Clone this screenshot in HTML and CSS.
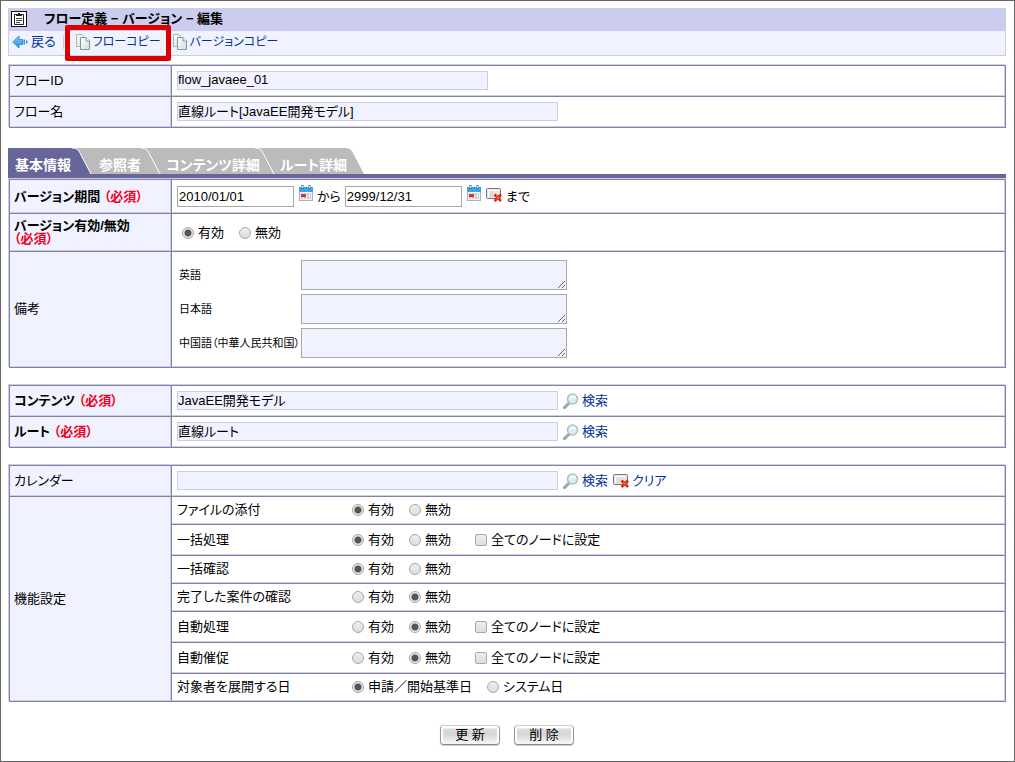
FILE: index.html
```html
<!DOCTYPE html>
<html lang="ja">
<head>
<meta charset="utf-8">
<title>フロー定義 − バージョン − 編集</title>
<link rel="stylesheet" href="styles.css">
</head>
<body>
<svg class="sprites" width="0" height="0" aria-hidden="true">
  <defs>
    <linearGradient id="blue" x1="0" y1="0" x2="0" y2="1"><stop offset="0" stop-color="#8fd2f8"/><stop offset="1" stop-color="#2388d6"/></linearGradient>
    <linearGradient id="paper" x1="0" y1="0" x2="1" y2="1"><stop offset="0" stop-color="#ffffff"/><stop offset="1" stop-color="#d0dede"/></linearGradient>
    <symbol id="copy" viewBox="0 0 16 16">
      <path d="M1.500.5h5.500l2.500 3v9h-8z" fill="url(#paper)" stroke="#a3b5b5"/>
      <path d="M5.500 3.500h5.500l3.500 3.500v8.500h-9z" fill="url(#paper)" stroke="#819999"/>
      <path d="M11 3.500v3.500h3.500" fill="#fff" stroke="#819999"/>
    </symbol>
    <symbol id="calendar" viewBox="0 0 14 16">
      <rect x=".5" y="2.500" width="13" height="13" fill="#eef1f3" stroke="#a9b4ba"/>
      <rect y="2" width="14" height="5" fill="#38a5e8"/>
      <path d="M3.500 0v4M10.500 0v4" stroke="#5f7480" stroke-width="2"/>
      <path d="M3.500 1v2M10.500 1v2" stroke="#d9edf8"/>
      <path d="M2 9.500h10M2 12.500h10" stroke="#b5bfc6" stroke-width="2" stroke-dasharray="2 1"/>
      <rect x="2" y="9" width="5" height="3" fill="#e22d2d"/>
    </symbol>
    <symbol id="erase" viewBox="0 0 16 15">
      <rect x=".5" y="1.500" width="14" height="10" rx="1" fill="#e6e6e6" stroke="#777"/>
      <path d="M2.500 10V3.500H13" fill="none" stroke="#fff"/>
      <path d="M4.500 4v6M6.500 4v6" stroke="#d3d3d3"/>
      <path d="M8.500 7.500l6.500 6.500M15 7.500l-6.500 6.500" stroke="#e01f05" stroke-width="2.500"/>
      <path d="M10 9l3.500 3.500M13.500 9L10 12.500" stroke="#ff7a3d"/>
    </symbol>
    <symbol id="search" viewBox="0 0 16 16">
      <path d="M1.500 14.500L6 10" stroke="#959595" stroke-width="3" stroke-linecap="round"/>
      <path d="M1.500 14L5.500 10" stroke="#cfcfcf"/>
      <circle cx="9.500" cy="6" r="5" fill="#d9edf8" stroke="#b3bcc2" stroke-width="1.500"/>
      <path d="M6 6.500q3-3 7-1v-1.500q-3-3-6-.5z" fill="#f6fcff"/>
    </symbol>
  </defs>
</svg>
<div class="page">
  <header>
    <h1 class="title">
      <svg class="title-icon" viewBox="0 0 16 16" aria-hidden="true">
        <rect x=".5" y=".5" width="15" height="15" fill="#fff" stroke="#111"/>
        <path d="M3.500 3.500h9v10h-9z" fill="#fff" stroke="#222"/>
        <path d="M5 3h6v2H5zM7 2h2v2H7z" fill="#222"/>
        <path d="M5 7.500h6M5 9.500h6M5 11.500h4" stroke="#444"/>
      </svg>
      <span>フロー定義 − バージョン − 編集</span>
    </h1>
    <nav class="toolbar">
      <a class="tool back" href="#"><svg width="16" height="14" viewBox="0 0 16 14" aria-hidden="true"><path d="M.7 7L7 1v3.500h3.500v5H7V13z" fill="url(#blue)" stroke="#3c91cf"/><path d="M11.500 4.500h1.500v5h-1.500zM14 5.500h1.500v3H14z" fill="#2f93da"/></svg>戻る</a>
      <a class="tool copy marked" href="#"><svg width="16" height="16" aria-hidden="true"><use href="#copy"/></svg>フローコピー</a>
      <a class="tool copy" href="#"><svg width="16" height="16" aria-hidden="true"><use href="#copy"/></svg>バージョンコピー</a>
    </nav>
  </header>

  <form>
    <table class="grid first">
      <tr><th scope="row"><label for="fid">フローID</label></th><td><input class="text short" id="fid" value="flow_javaee_01" readonly></td></tr>
      <tr><th scope="row"><label for="fname">フロー名</label></th><td><input class="text" id="fname" value="直線ルート[JavaEE開発モデル]" readonly></td></tr>
    </table>

    <div class="tabs" role="tablist">
      <button class="tab active" type="button" role="tab" aria-selected="true"><span>基本情報</span><svg viewBox="0 0 20 26" aria-hidden="true"><path d="M0 0C6 0 7 3 9 7L19 26H0z" fill="currentColor"/><path d="M0 0C6 0 7 3 9 7L19 26" fill="none" stroke="#fff"/></svg></button>
      <button class="tab viewers" type="button" role="tab"><span>参照者</span><svg viewBox="0 0 20 26" aria-hidden="true"><path d="M0 0C6 0 7 3 9 7L19 26" fill="none" stroke="#fff"/></svg></button>
      <button class="tab contents" type="button" role="tab"><span>コンテンツ詳細</span><svg viewBox="0 0 20 26" aria-hidden="true"><path d="M0 0C6 0 7 3 9 7L19 26" fill="none" stroke="#fff"/></svg></button>
      <button class="tab last" type="button" role="tab"><span>ルート詳細</span><svg viewBox="0 0 20 26" aria-hidden="true"><path d="M0 0C6 0 7 3 9 7L19 26H0z" fill="currentColor"/></svg></button>
    </div>

    <table class="grid basic">
      <tr class="period">
        <th scope="row" class="required">バージョン期間 <em>（必須）</em></th>
        <td><div class="line">
          <input class="date" value="2010/01/01" aria-label="開始日">
          <button class="icon" type="button" aria-label="開始日カレンダー"><svg width="14" height="16" aria-hidden="true"><use href="#calendar"/></svg></button>
          <span>から</span>
          <input class="date" value="2999/12/31" aria-label="終了日">
          <button class="icon" type="button" aria-label="終了日カレンダー"><svg width="14" height="16" aria-hidden="true"><use href="#calendar"/></svg></button>
          <button class="icon erase" type="button" aria-label="終了日クリア"><svg width="16" height="15" aria-hidden="true"><use href="#erase"/></svg></button>
          <span>まで</span>
        </div></td>
      </tr>
      <tr class="state">
        <th scope="row" class="required">バージョン有効/無効<br><em>（必須）</em></th>
        <td><div class="options inset"><label><input type="radio" name="state" checked>有効</label><label><input type="radio" name="state">無効</label></div></td>
      </tr>
      <tr class="notes">
        <th scope="row">備考</th>
        <td><div class="note-list">
          <label for="en">英語</label><textarea id="en"></textarea>
          <label for="ja">日本語</label><textarea id="ja"></textarea>
          <label for="zh">中国語（中華人民共和国）</label><textarea id="zh"></textarea>
        </div></td>
      </tr>
    </table>

    <table class="grid">
      <tr><th scope="row" class="required"><label for="content">コンテンツ <em>（必須）</em></label></th><td><div class="line"><input class="text" id="content" value="JavaEE開発モデル" readonly><a class="action" href="#"><svg width="16" height="16" aria-hidden="true"><use href="#search"/></svg>検索</a></div></td></tr>
      <tr><th scope="row" class="required"><label for="route">ルート <em>（必須）</em></label></th><td><div class="line"><input class="text" id="route" value="直線ルート" readonly><a class="action" href="#"><svg width="16" height="16" aria-hidden="true"><use href="#search"/></svg>検索</a></div></td></tr>
    </table>

    <table class="grid">
      <tr><th scope="row"><label for="cal">カレンダー</label></th><td><div class="line"><input class="text" id="cal" readonly><a class="action" href="#"><svg width="16" height="16" aria-hidden="true"><use href="#search"/></svg>検索</a><a class="action" href="#"><svg width="16" height="15" aria-hidden="true"><use href="#erase"/></svg>クリア</a></div></td></tr>
      <tr class="slim"><th scope="row" rowspan="7">機能設定</th><td><div class="feature"><span>ファイルの添付</span><div class="options"><label><input type="radio" name="f1" checked>有効</label><label><input type="radio" name="f1">無効</label></div></div></td></tr>
      <tr><td><div class="feature"><span>一括処理</span><div class="options"><label><input type="radio" name="f2" checked>有効</label><label><input type="radio" name="f2">無効</label><label class="all"><input type="checkbox">全てのノードに設定</label></div></div></td></tr>
      <tr class="slim"><td><div class="feature"><span>一括確認</span><div class="options"><label><input type="radio" name="f3" checked>有効</label><label><input type="radio" name="f3">無効</label></div></div></td></tr>
      <tr class="slim"><td><div class="feature"><span>完了した案件の確認</span><div class="options"><label><input type="radio" name="f4">有効</label><label><input type="radio" name="f4" checked>無効</label></div></div></td></tr>
      <tr><td><div class="feature"><span>自動処理</span><div class="options"><label><input type="radio" name="f5">有効</label><label><input type="radio" name="f5" checked>無効</label><label class="all"><input type="checkbox">全てのノードに設定</label></div></div></td></tr>
      <tr><td><div class="feature"><span>自動催促</span><div class="options"><label><input type="radio" name="f6">有効</label><label><input type="radio" name="f6" checked>無効</label><label class="all"><input type="checkbox">全てのノードに設定</label></div></div></td></tr>
      <tr class="slim"><td><div class="feature"><span>対象者を展開する日</span><div class="options"><label><input type="radio" name="f7" checked>申請／開始基準日</label><label><input type="radio" name="f7">システム日</label></div></div></td></tr>
    </table>

    <div class="buttons">
      <button class="push" type="button">更 新</button>
      <button class="push" type="button">削 除</button>
    </div>
  </form>
</div>
</body>
</html>
```

FILE: styles.css
```css
:root {
  --lilac: #ccccee;
  --pale: #f0f2ff;
  --line: #8282a0;
  --purple: #666699;
  --tab: #bbbbbb;
  --link: #003399;
}

* { box-sizing: border-box; }

body {
  margin: 0;
  background: #fff;
  color: #000;
  font: 13px/16px "Liberation Sans", "Noto Sans CJK JP", sans-serif;
  font-feature-settings: "palt";
}

input, button, textarea { font: inherit; font-feature-settings: inherit; color: inherit; margin: 0; }
svg { display: block; flex: none; }
.sprites { position: absolute; }

.page {
  min-height: 100vh;
  padding: 7px 8px 7px 7px;
  border: 1px solid #666;
}

.title {
  display: flex;
  align-items: center;
  gap: 17px;
  height: 23px;
  margin: 0;
  padding: 0 3px 2px;
  background: var(--lilac);
  font-size: 13px;
}
.title-icon { width: 16px; height: 16px; }

.toolbar {
  display: flex;
  align-items: center;
  gap: 7px;
  height: 25px;
  padding: 0 3px 3px;
  border: 1px solid var(--lilac);
  border-top: 0;
  background: var(--pale);
}
.tool, .action { display: flex; align-items: center; color: var(--link); text-decoration: none; }
.tool { gap: 2px; }
.copy { font-size: 12px; }
.back { gap: 3px; padding-right: 7px; border-right: 1px solid #ccd; line-height: 13px; }
.marked { position: relative; margin-left: 4px; padding-right: 4px; }
.marked::after {
  content: "";
  position: absolute;
  inset: -9px -6px -11px -10px;
  border: 5px solid #dc0000;
  border-radius: 2px;
}

.grid {
  width: calc(100% - 1px);
  margin: 17px 0 0 1px;
  border: solid var(--line);
  border-width: 1px 0 0 1px;
  border-spacing: 0;
  box-shadow: -1px -1px 0 var(--lilac);
}
.grid.first { margin-top: 9px; }
.grid.basic { margin-top: 1px; }
.grid th, .grid td {
  height: 31px;
  padding: 0 5px;
  border: solid var(--line);
  border-width: 0 1px 1px 0;
  box-shadow: inset -1px -1px 0 var(--lilac);
  text-align: left;
  vertical-align: middle;
}
.grid th { width: 162px; padding: 0 4px; background: var(--pale); font-weight: normal; }
.grid th.required { font-weight: bold; white-space: nowrap; }
.grid em { color: #f00020; font-style: normal; }
.grid .period > * { height: 34px; }
.grid .state > * { height: 38px; line-height: 13px; }
.grid .state > th { padding-bottom: 2px; }
.grid .notes > * { height: 116px; padding-bottom: 2px; }
.grid .slim > td { height: 28px; padding-bottom: 1px; }

.line { display: flex; align-items: center; gap: 5px; }
.period .line { gap: 4px; }

.text {
  display: block;
  width: 381px;
  height: 19px;
  padding: 0 0 3px;
  border: 1px solid var(--lilac);
  background: var(--pale);
}
.grid td:has(> .text), .grid td:has(.line > .text) { padding-bottom: 1px; }
.text.short { width: 311px; }
.date { width: 117px; height: 21px; padding: 1px; border: 1px solid #a9a9a9; background: #fff; }
.icon { padding: 0 0 8px 1px; border: 0; background: none; }
.icon.erase { padding-bottom: 4px; }
.action { gap: 3px; }

.tabs {
  display: flex;
  margin-top: 20px;
  border-bottom: 4px solid var(--purple);
}
.tab {
  display: flex;
  justify-content: space-between;
  width: 84px;
  height: 26px;
  padding: 0 0 0 7px;
  border: 0;
  background: var(--tab);
  color: var(--tab);
  font-size: 14px;
  font-weight: bold;
  white-space: nowrap;
}
.tab span { z-index: 1; flex: 1; min-width: 0; padding-top: 8px; color: #fff; line-height: 18px; text-align: left; }
.tab svg { width: 20px; height: 26px; background: var(--tab); }
.tab.active { background: var(--purple); color: var(--purple); }
.tab.viewers { width: 69px; }
.tab.contents { width: 114px; padding-left: 5px; }
.tab.last { width: 90px; padding-left: 5px; background: linear-gradient(var(--tab), var(--tab)) left / calc(100% - 20px) 100% no-repeat; }
.tab.last svg { background: none; }

.options { display: flex; gap: 15px; }
.options.inset { padding-left: 5px; }
.options label { display: flex; align-items: center; gap: 4px; line-height: 16px; }
.options .all { padding-left: 9px; }
.options input {
  appearance: none;
  width: 12px;
  height: 12px;
  border: 1px solid #a8a8a8;
  border-radius: 2px;
  background: linear-gradient(#eee, #ddd);
}
.options input[type="radio"] { border-radius: 50%; }
.options input[type="radio"]:checked { background: radial-gradient(circle, #555 0 3px, #e6e6e6 4px); }

.feature { display: grid; grid-template-columns: 175px 1fr; align-items: center; }

.note-list {
  display: grid;
  grid-template-columns: 120px 266px;
  gap: 4px 2px;
  align-items: center;
  padding-left: 2px;
  font-size: 11px;
}
.note-list label { white-space: nowrap; }
.note-list textarea { width: 266px; height: 30px; padding: 2px; border: 1px solid #a9a9a9; background: var(--pale); }

.buttons { display: flex; justify-content: center; gap: 14px; margin-top: 23px; }
.push {
  width: 60px;
  height: 20px;
  padding: 0;
  border: 1px solid #aaa;
  border-color: #ccc #999 #888 #999;
  border-radius: 4px;
  background: linear-gradient(#fff 0 2px, #ddd 3px, #d4d4d4 8px, #f2f2f2 16px);
  box-shadow: inset 2px 0 1px #fff, inset -2px 0 1px #fff, 0 1px 1px #ccc;
  line-height: 18px;
}
```
